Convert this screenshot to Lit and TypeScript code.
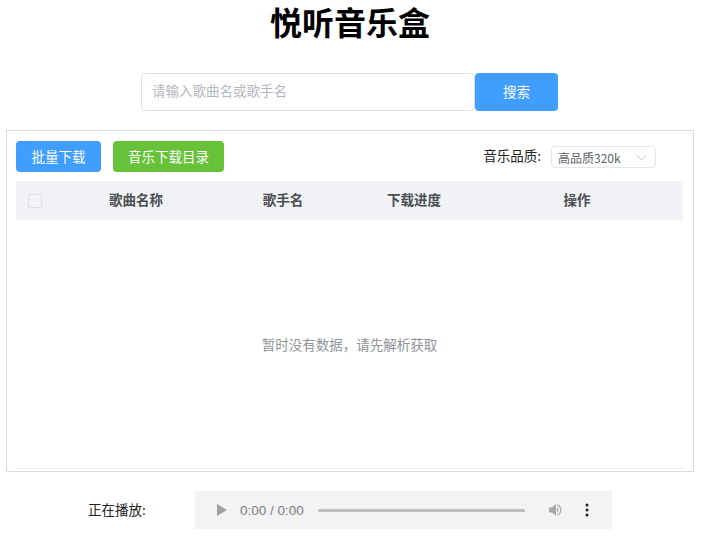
import { LitElement, html, css } from "lit";
import { customElement } from "lit/decorators.js";

@customElement("app-root")
export class AppRoot extends LitElement {
  static styles = css`
    :host {
      display: block;
      width: 714px;
      height: 545px;
      overflow: hidden;
      background: #fff;
      font-family: "Noto Sans CJK SC", "Noto Sans", sans-serif;
      color: #000;
    }
    h1 {
      margin: 0;
      height: 73px;
      box-sizing: border-box;
      width: 700px;
      text-align: center;
      font-family: "Liberation Sans", "Noto Sans CJK SC", sans-serif;
      font-size: 32px;
      line-height: 48px;
      font-weight: 700;
    }
    .search {
      display: flex;
      margin-left: 141px;
      height: 38px;
    }
    .input {
      width: 334px;
      box-sizing: border-box;
      border: 1px solid #dcdfe6;
      border-radius: 4px;
      padding-left: 10px;
      font-size: 13.5px;
      line-height: 33px;
      color: #b4b7bd;
    }
    .btn {
      display: flex;
      align-items: center;
      justify-content: center;
      box-sizing: border-box;
      border-radius: 4px;
      color: #fff;
      font-size: 13.5px;
      padding-bottom: 2px;
      background: #409eff;
    }
    .search .btn {
      width: 83px;
    }
    .panel {
      margin: 19px 20px 0 6px;
      height: 342px;
      box-sizing: border-box;
      border: 1px solid #dcdcdc;
      padding: 10px 10px 2px 9px;
      display: flex;
      flex-direction: column;
    }
    .toolbar {
      display: flex;
      align-items: center;
      height: 31px;
      gap: 12px;
    }
    .toolbar .btn {
      height: 31px;
      width: 85px;
    }
    .toolbar .green {
      background: #67c23a;
      width: 111px;
    }
    .quality {
      margin-left: auto;
      margin-right: 27px;
      display: flex;
      align-items: center;
      gap: 10px;
      font-size: 13.5px;
      color: #222;
      padding-top: 1px;
    }
    .quality-label {
      padding-bottom: 5px;
    }
    .select {
      width: 105px;
      height: 22px;
      box-sizing: border-box;
      border: 1px solid #e4e7ed;
      border-radius: 4px;
      padding: 0 8px 0 6px;
      display: flex;
      align-items: center;
      justify-content: space-between;
      font-size: 12px;
      color: #606266;
    }
    .select svg {
      display: block;
    }
    .thead {
      margin-top: 9px;
      height: 39px;
      background: #f0f2f5;
      display: grid;
      grid-template-columns: 40px 160px 134px 128px 1fr;
      padding-right: 7px;
      align-items: center;
      text-align: center;
      font-size: 13.5px;
      font-weight: 700;
      color: #4a4d52;
    }
    .cell {
      padding-bottom: 3px;
    }
    .check {
      width: 14px;
      height: 14px;
      box-sizing: border-box;
      margin-left: 12px;
      border: 1px solid #dcdfe6;
      border-radius: 2px;
      background: #f2f4f7;
    }
    .empty {
      flex: 1;
      display: flex;
      align-items: center;
      justify-content: center;
      padding-bottom: 1px;
      font-size: 13.5px;
      color: #909399;
      border-bottom: 1px solid #ebeef5;
    }
    .footer {
      display: flex;
      align-items: center;
      margin-top: 19px;
      height: 38px;
      padding-left: 88px;
    }
    .label {
      width: 107px;
      padding-bottom: 2px;
      font-size: 13.5px;
      color: #222;
    }
    .audio {
      width: 417px;
      height: 38px;
      background: #f1f3f4;
      display: flex;
      align-items: center;
      font-family: "Liberation Sans", Arial, sans-serif;
      font-size: 13.5px;
      color: #7b7c7e;
    }
    .play {
      margin-left: 22px;
      flex: none;
    }
    .time {
      margin-left: 13px;
      width: 78px;
      white-space: nowrap;
    }
    .track {
      width: 207px;
      height: 3px;
      border-radius: 2px;
      background: #bcbdbe;
    }
    .vol {
      margin-left: 23px;
      flex: none;
    }
    .more {
      margin-left: 21px;
      flex: none;
    }
  `;

  render() {
    return html`
      <h1>悦听音乐盒</h1>
      <div class="search">
        <div class="input">请输入歌曲名或歌手名</div>
        <div class="btn">搜索</div>
      </div>
      <div class="panel">
        <div class="toolbar">
          <div class="btn">批量下载</div>
          <div class="btn green">音乐下载目录</div>
          <div class="quality">
            <span class="quality-label">音乐品质:</span>
            <div class="select">
              <span>高品质320k</span>
              <svg width="11" height="7" viewBox="0 0 11 7" fill="none" stroke="#c0c4cc" stroke-width="1">
                <path d="M.5 1 5.5 6 10.5 1" />
              </svg>
            </div>
          </div>
        </div>
        <div class="thead">
          <div class="check"></div>
          <div class="cell">歌曲名称</div>
          <div class="cell">歌手名</div>
          <div class="cell">下载进度</div>
          <div class="cell">操作</div>
        </div>
        <div class="empty">暂时没有数据&#xFF0C;请先解析获取</div>
      </div>
      <div class="footer">
        <div class="label">正在播放:</div>
        <div class="audio">
          <svg class="play" width="10" height="12" viewBox="0 0 10 12" fill="#a0a1a2"><path d="M0 0 10 6 0 12Z" /></svg>
          <span class="time">0:00 / 0:00</span>
          <div class="track"></div>
          <svg class="vol" width="16" height="16" viewBox="0 0 16 16" fill="#a6a7a8">
            <path d="M1 5.5H4L8 2V14L4 10.5H1Z" />
            <path d="M9 5.2C10.6 5.8 10.6 10.2 9 10.8Z" />
            <path d="M9 2.2C14.8 3.4 14.8 12.6 9 13.8V12.6C13.2 11.6 13.2 4.4 9 3.4Z" />
          </svg>
          <svg class="more" width="4" height="14" viewBox="0 0 4 14" fill="#222">
            <circle cx="2" cy="2" r="1.5" /><circle cx="2" cy="7" r="1.5" /><circle cx="2" cy="12" r="1.5" />
          </svg>
        </div>
      </div>
    `;
  }
}
